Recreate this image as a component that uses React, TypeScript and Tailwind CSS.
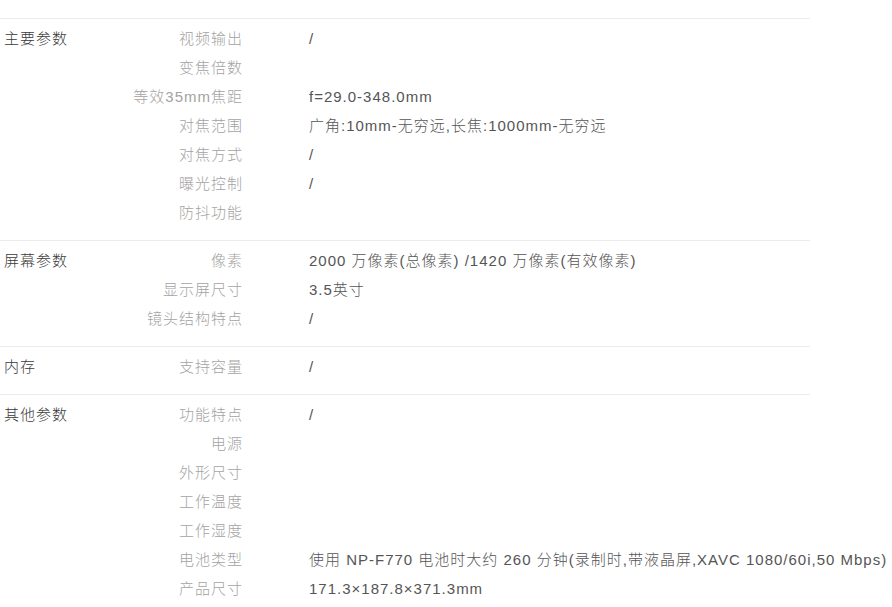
type Row = { label: string; value: string };
type Section = { title: string; rows: Row[] };

const sections: Section[] = [
  {
    title: "主要参数",
    rows: [
      { label: "视频输出", value: "/" },
      { label: "变焦倍数", value: "" },
      { label: "等效35mm焦距", value: "f=29.0-348.0mm" },
      { label: "对焦范围", value: "广角:10mm-无穷远,长焦:1000mm-无穷远" },
      { label: "对焦方式", value: "/" },
      { label: "曝光控制", value: "/" },
      { label: "防抖功能", value: "" },
    ],
  },
  {
    title: "屏幕参数",
    rows: [
      { label: "像素", value: "2000 万像素(总像素) /1420 万像素(有效像素)" },
      { label: "显示屏尺寸", value: "3.5英寸" },
      { label: "镜头结构特点", value: "/" },
    ],
  },
  {
    title: "内存",
    rows: [{ label: "支持容量", value: "/" }],
  },
  {
    title: "其他参数",
    rows: [
      { label: "功能特点", value: "/" },
      { label: "电源", value: "" },
      { label: "外形尺寸", value: "" },
      { label: "工作温度", value: "" },
      { label: "工作湿度", value: "" },
      {
        label: "电池类型",
        value:
          "使用 NP-F770 电池时大约 260 分钟(录制时,带液晶屏,XAVC 1080/60i,50 Mbps)",
      },
      { label: "产品尺寸", value: "171.3×187.8×371.3mm" },
    ],
  },
];

export default function App() {
  return (
    <div className="w-[892px] h-[607px] overflow-hidden bg-white pt-[18px] font-['Liberation_Sans','Noto_Sans_CJK_SC',sans-serif] text-[15px] font-light tracking-[1px]">
      <div className="w-[810px]">
        {sections.map((section) => (
          <div
            key={section.title}
            className="flex border-t border-[#ebebeb] pt-[5px] pb-[13px]"
          >
            <div className="w-[120px] shrink-0 pl-[4px] leading-[29px] text-[#3a3a3a]">
              {section.title}
            </div>
            <div className="flex-1">
              {section.rows.map((row) => (
                <div key={row.label} className="flex h-[29px] items-center leading-[29px]">
                  <div className="w-[123px] shrink-0 text-right text-[#a3a3a3]">
                    {row.label}
                  </div>
                  <div className="ml-[66px] whitespace-nowrap text-[#555]">
                    {row.value}
                  </div>
                </div>
              ))}
            </div>
          </div>
        ))}
      </div>
    </div>
  );
}
